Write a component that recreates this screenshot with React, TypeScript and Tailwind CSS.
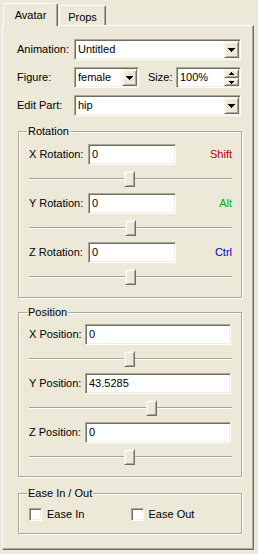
import React from 'react'

// ── XP classic bevels ─────────────────────────────────────────────────────────

const sunken =
  'border border-t-[#ACA899] border-l-[#ACA899] border-b-white border-r-white shadow-[inset_1px_1px_0_#716F64,inset_-1px_-1px_0_#F1EFE2]'
const raised =
  'border border-t-[#F1EFE2] border-l-[#F1EFE2] border-b-[#716F64] border-r-[#716F64] shadow-[inset_1px_1px_0_#fff,inset_-1px_-1px_0_#ACA899] bg-[#ECE9D8]'

function DownArrow() {
  return (
    <svg width="7" height="4" viewBox="0 0 7 4" shapeRendering="crispEdges">
      <rect x="0" y="0" width="7" height="1" fill="#000" />
      <rect x="1" y="1" width="5" height="1" fill="#000" />
      <rect x="2" y="2" width="3" height="1" fill="#000" />
      <rect x="3" y="3" width="1" height="1" fill="#000" />
    </svg>
  )
}

function SmallArrow({ up }: { up?: boolean }) {
  return (
    <svg width="5" height="3" viewBox="0 0 5 3" shapeRendering="crispEdges" className={up ? 'rotate-180' : ''}>
      <rect x="0" y="0" width="5" height="1" fill="#000" />
      <rect x="1" y="1" width="3" height="1" fill="#000" />
      <rect x="2" y="2" width="1" height="1" fill="#000" />
    </svg>
  )
}

function Combo({ value, className }: { value: string; className: string }) {
  return (
    <div className={`flex h-[21px] items-stretch bg-white p-[1px] ${sunken} ${className}`}>
      <span className="flex flex-1 items-center pl-[2px] leading-none">{value}</span>
      <div className={`flex w-[15px] items-center justify-center ${raised}`}>
        <DownArrow />
      </div>
    </div>
  )
}

function Spin({ value }: { value: string }) {
  return (
    <div className={`flex h-[21px] w-[65px] items-stretch bg-white p-[1px] ${sunken}`}>
      <span className="flex flex-1 items-center pl-[2px] leading-none">{value}</span>
      <div className="flex w-[15px] flex-col">
        <div className={`flex h-[9px] items-center justify-center ${raised}`}>
          <SmallArrow up />
        </div>
        <div className={`flex h-[8px] items-center justify-center ${raised}`}>
          <SmallArrow />
        </div>
      </div>
    </div>
  )
}

function Field({ value, className }: { value: string; className: string }) {
  return (
    <div className={`flex h-[21px] items-center bg-white pl-[3px] leading-none ${sunken} ${className}`}>
      {value}
    </div>
  )
}

function Slider({ pos }: { pos: number }) {
  return (
    <div className="relative flex h-[28px] items-center">
      <div className="h-[2px] w-full border-t border-t-[#A7A492] bg-white" />
      <div className={`absolute top-[6px] h-[16px] w-[11px] ${raised}`} style={{ left: pos }} />
    </div>
  )
}

function Group({ title, className, children }: { title: string; className: string; children: React.ReactNode }) {
  return (
    <div
      className={`relative ml-[1px] w-[224px] border border-[#ACA899] pl-[10px] pr-[9px] shadow-[inset_1px_1px_0_#fff,1px_1px_0_#fff] ${className}`}
    >
      <span className="absolute -top-[7px] left-[8px] bg-[#ECE9D8] px-[1px] leading-[13px]">{title}</span>
      {children}
    </div>
  )
}

// ── Data ──────────────────────────────────────────────────────────────────────

const ROTATIONS = [
  { label: 'X Rotation:', key: 'Shift', color: 'text-[#B50000]', pos: 95 },
  { label: 'Y Rotation:', key: 'Alt', color: 'text-[#00A800]', pos: 96 },
  { label: 'Z Rotation:', key: 'Ctrl', color: 'text-[#0000D8]', pos: 96 },
]

const POSITIONS = [
  { label: 'X Position:', value: '0', pos: 95 },
  { label: 'Y Position:', value: '43.5285', pos: 117 },
  { label: 'Z Position:', value: '0', pos: 95 },
]

// ── Page ──────────────────────────────────────────────────────────────────────

export default function App() {
  return (
    <div
      className="h-[554px] w-[258px] bg-[#ECE9D8] text-[11px] text-black"
      style={{ fontFamily: "Tahoma, 'Liberation Sans', Arial, sans-serif" }}
    >
      {/* Tabs */}
      <div className="flex items-end pl-[3px] pt-[3px]">
        <div className="relative z-10 -mb-[1px] flex h-[23px] w-[55px] justify-center rounded-t-[2px] border-l border-t border-r border-l-white border-t-white border-r-[#716F64] bg-[#ECE9D8] pt-[3px] shadow-[inset_-1px_0_0_#ACA899]">
          Avatar
        </div>
        <div className="ml-[1px] flex h-[20px] w-[47px] justify-center rounded-t-[2px] border-l border-t border-r border-l-white border-t-white border-r-[#716F64] pt-[3px] shadow-[inset_-1px_0_0_#ACA899]">
          Props
        </div>
      </div>

      {/* Panel */}
      <div className="ml-[2px] h-[525px] w-[252px] border border-t-white border-l-white border-r-[#716F64] border-b-[#716F64] pl-[14px] pt-[13px] shadow-[inset_-1px_-1px_0_#ACA899]">
        <div className="flex flex-col gap-[7px]">
          <div className="flex items-center">
            <span className="w-[57px]">Animation:</span>
            <Combo value="Untitled" className="w-[167px]" />
          </div>
          <div className="flex items-center">
            <span className="w-[57px]">Figure:</span>
            <Combo value="female" className="w-[65px]" />
            <span className="ml-[9px] w-[28px]">Size:</span>
            <Spin value="100%" />
          </div>
          <div className="flex items-center">
            <span className="w-[57px]">Edit Part:</span>
            <Combo value="hip" className="w-[167px]" />
          </div>
        </div>

        <Group title="Rotation" className="mt-[15px] pb-[6px] pt-[12px]">
          {ROTATIONS.map(r => (
            <div key={r.label}>
              <div className="flex h-[21px] items-center">
                <span className="w-[59px]">{r.label}</span>
                <Field value="0" className="w-[88px]" />
                <span className={`ml-auto ${r.color}`}>{r.key}</span>
              </div>
              <Slider pos={r.pos} />
            </div>
          ))}
        </Group>

        <Group title="Position" className="mt-[14px] pb-[5px] pt-[11px]">
          {POSITIONS.map(p => (
            <div key={p.label}>
              <div className="flex h-[21px] items-center">
                <span className="w-[56px]">{p.label}</span>
                <Field value={p.value} className="w-[146px]" />
              </div>
              <Slider pos={p.pos} />
            </div>
          ))}
        </Group>

        <Group title="Ease In / Out" className="mt-[16px] pb-[12px] pt-[14px]">
          <div className="flex h-[13px] items-center">
            {['Ease In', 'Ease Out'].map(t => (
              <label key={t} className="flex w-[105px] items-center gap-[5px]">
                <span className={`h-[13px] w-[13px] bg-white ${sunken}`} />
                {t}
              </label>
            ))}
          </div>
        </Group>
      </div>
    </div>
  )
}
